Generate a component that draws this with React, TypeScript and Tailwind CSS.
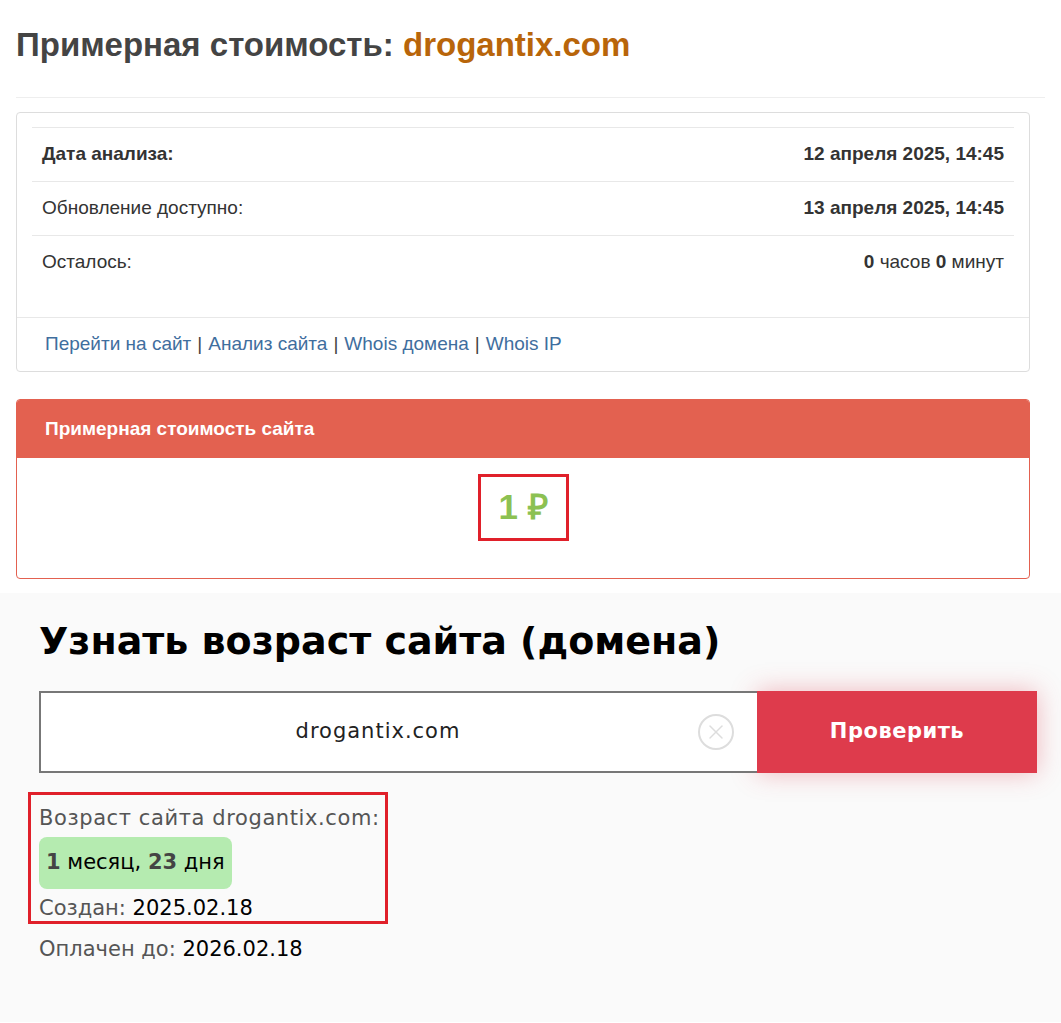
import { X } from "lucide-react";

const rows = [
  { label: "Дата анализа:", bold: true, value: <b>12 апреля 2025, 14:45</b> },
  { label: "Обновление доступно:", bold: false, value: <b>13 апреля 2025, 14:45</b> },
  {
    label: "Осталось:",
    bold: false,
    value: (
      <span>
        <b>0</b> часов <b>0</b> минут
      </span>
    ),
  },
];

const links = ["Перейти на сайт", "Анализ сайта", "Whois домена", "Whois IP"];

export default function App() {
  return (
    <div className="min-h-[1023px] w-[1061px] bg-white">
      <div className="px-4 pb-[14px] font-['Liberation_Sans',Arial,sans-serif] text-[#333]">
        <h1 className="pt-[25px] pb-[27px] text-[33px] leading-[40px] font-bold text-[#444]">
          Примерная стоимость: <span className="text-[#b8650a]">drogantix.com</span>
        </h1>
        <div className="border-t border-[#eee] mt-[5px]" />

        <div className="mt-[14px] w-[1014px] rounded border border-[#ddd]">
          <div className="px-[15px] pt-[14px] pb-[28px]">
            {rows.map((r) => (
              <div
                key={r.label}
                className="flex items-center justify-between border-t border-[#e8e8e8] px-[10px] h-[54px] text-[19px] text-[#333]"
              >
                <span className={r.bold ? "font-bold" : ""}>{r.label}</span>
                <span>{r.value}</span>
              </div>
            ))}
          </div>
          <div className="border-t border-[#e8e8e8] px-[28px] h-[54px] flex items-center text-[19px] text-[#444]">
            {links.map((l, i) => (
              <span key={l}>
                {i > 0 && <span className="px-[6px]">|</span>}
                <a className="text-[#3f6e9e]">{l}</a>
              </span>
            ))}
          </div>
        </div>

        <div className="mt-[27px] w-[1014px] rounded border border-[#e36150] overflow-hidden">
          <div className="bg-[#e36150] h-[58px] px-[28px] flex items-center text-[19px] font-bold text-white">
            Примерная стоимость сайта
          </div>
          <div className="h-[120px] flex items-start justify-center pt-[16px]">
            <div className="border-[3px] border-[#e0202a] w-[91px] h-[67px] flex items-center justify-center text-[35px] font-bold text-[#8cc152]">
              1 ₽
            </div>
          </div>
        </div>
      </div>

      <div className="bg-[#fafafa] pl-[39px] pr-[24px] pt-[20px] pb-[60px] font-['DejaVu_Sans',sans-serif]">
        <h2 className="text-[38px] leading-[56px] font-bold text-black">
          Узнать возраст сайта (домена)
        </h2>
        <div className="mt-[22px] flex h-[82px]">
          <div className="relative shrink-0 w-[718px] bg-white border-2 border-r-0 border-[#777] flex items-center justify-center pr-[42px] text-[21px] tracking-[1px] text-[#222]">
            drogantix.com
            <span className="absolute right-[23px] top-1/2 -translate-y-1/2 w-[36px] h-[36px] rounded-full border-2 border-[#ddd] flex items-center justify-center">
              <X className="w-[24px] h-[24px] text-[#ddd]" strokeWidth={1.5} />
            </span>
          </div>
          <button className="shrink-0 w-[280px] bg-[#de3b4c] text-white text-[21px] tracking-[0.5px] font-bold shadow-[0_0_24px_rgba(222,59,76,0.35)]">
            Проверить
          </button>
        </div>

        <div className="mt-[19px] -ml-[11px] w-[360px] border-[3px] border-[#e0202a] pl-[8px] pt-[9px]">
          <div className="text-[21px] leading-[28px] tracking-[0.6px] text-[#555]">Возраст сайта drogantix.com:</div>
          <div className="mt-[5px] inline-flex items-center h-[52px] px-[7px] rounded-[8px] bg-[#b5ebb0] text-[21px] text-black">
            <b className="text-[#444]">1</b>&nbsp;месяц,&nbsp;<b className="text-[#444]">23</b>&nbsp;дня
          </div>
          <div className="mt-[6px] text-[21px] leading-[26px] text-[#555]">
            Создан: <span className="text-black">2025.02.18</span>
          </div>
        </div>
        <div className="mt-[12px] text-[21px] leading-[26px] text-[#555]">
          Оплачен до: <span className="text-black">2026.02.18</span>
        </div>
      </div>
    </div>
  );
}
